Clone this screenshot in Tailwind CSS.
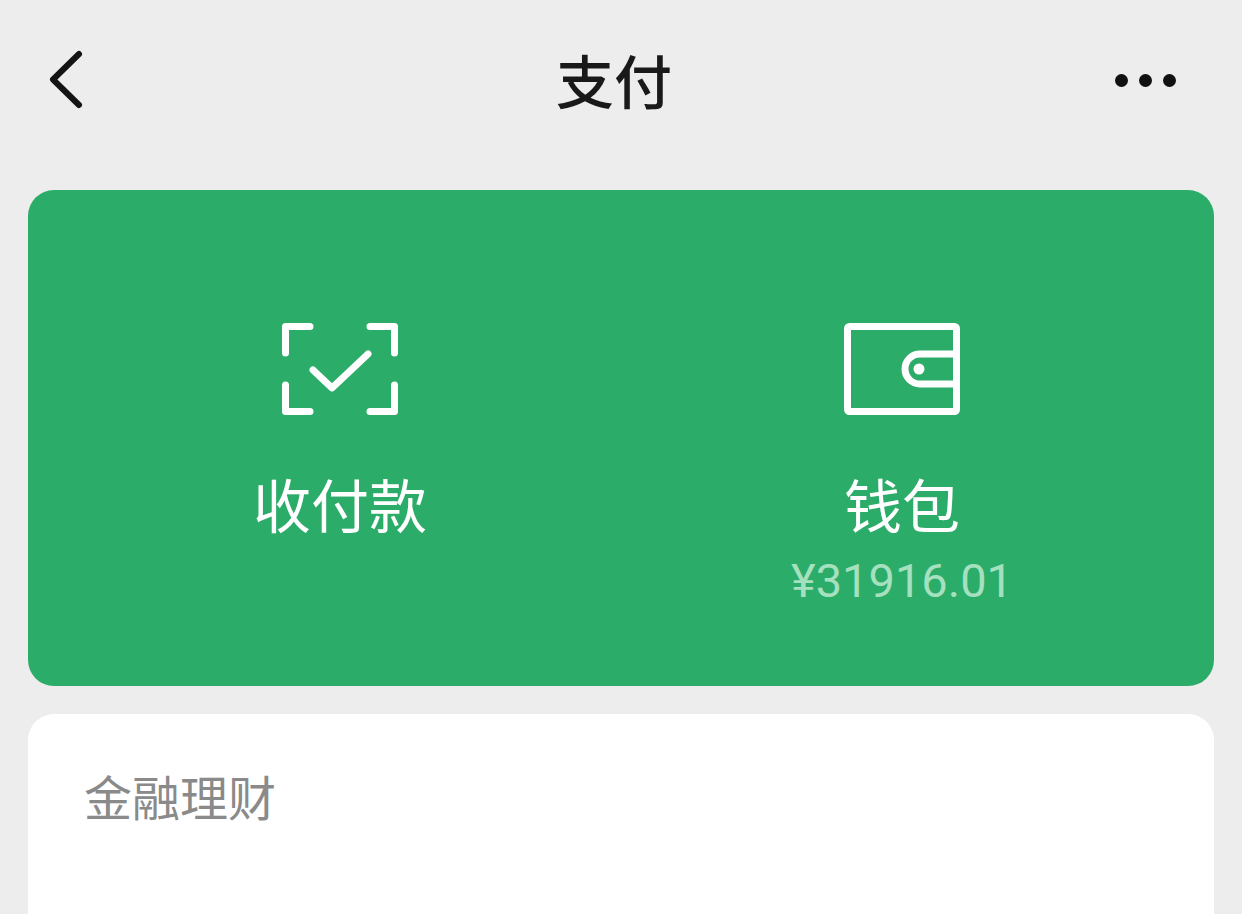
<!DOCTYPE html>
<html lang="zh-CN">

<head>
  <meta charset="UTF-8">
  <meta name="viewport" content="width=device-width, initial-scale=1.0">
  <title>支付</title>
  <script src="https://cdn.jsdelivr.net/npm/@tailwindcss/browser@4"></script>
</head>

<body class="bg-[#ededed] font-['Noto_Sans_CJK_SC','Noto_Sans',sans-serif] h-[914px] overflow-hidden">

  <!-- Top bar -->
  <header class="h-[190px] pb-[30px] pl-[46px] pr-[66px] grid grid-cols-3 items-center">
    <svg class="w-[44px] h-[66px]" viewBox="0 0 44 66" fill="none" stroke="#141414" stroke-width="6" stroke-linecap="round" stroke-linejoin="round">
      <path d="M33 7 L7 32.5 L33 58" />
    </svg>
    <h1 class="text-[58px] leading-none font-medium text-[#191919] text-center -translate-y-[1px] translate-x-[3px]">支付</h1>
    <div class="flex gap-[11px] justify-end">
      <span class="w-[13px] h-[13px] rounded-full bg-[#111]"></span>
      <span class="w-[13px] h-[13px] rounded-full bg-[#111]"></span>
      <span class="w-[13px] h-[13px] rounded-full bg-[#111]"></span>
    </div>
  </header>

  <main class="px-[28px]">
    <!-- Green card -->
    <section class="h-[496px] rounded-[26px] bg-[#2cac69] px-[31px] pt-[133px] grid grid-cols-2 items-start">
      <div class="flex flex-col items-center">
        <svg class="w-[116px] h-[92px]" viewBox="0 0 116 92" fill="none" stroke="#fff" stroke-width="7" stroke-linejoin="round" stroke-linecap="round">
          <path d="M28 3.5 H3.5 V30" />
          <path d="M88 3.5 H112.5 V30" />
          <path d="M3.5 62 V88.5 H28" />
          <path d="M112.5 62 V88.5 H88" />
          <path d="M31 47 L50 65 L86 31" />
        </svg>
        <p class="mt-[48px] text-[58px] leading-[80px] text-white">收付款</p>
      </div>
      <div class="flex flex-col items-center">
        <svg class="w-[116px] h-[92px]" viewBox="0 0 116 92" fill="none" stroke="#fff" stroke-width="7" stroke-linejoin="round">
          <rect x="3.5" y="3.5" width="109" height="85" rx="2" />
          <path d="M113 31 H76 A15 15 0 0 0 76 61 H113" />
          <circle cx="75" cy="46" r="5.5" fill="#fff" stroke="none" />
        </svg>
        <p class="mt-[48px] text-[58px] leading-[80px] text-white">钱包</p>
        <p class="font-['Roboto',sans-serif] text-[47px] leading-[60px] text-[#a5e0bf] mt-[8px]">¥31916.01</p>
      </div>
    </section>

    <!-- Finance card -->
    <section class="mt-[28px] h-[200px] rounded-t-[26px] bg-white px-[56px] pt-[46px]">
      <h2 class="text-[48px] leading-[70px] text-[#8a8a8a]">金融理财</h2>
    </section>
  </main>

</body>

</html>
